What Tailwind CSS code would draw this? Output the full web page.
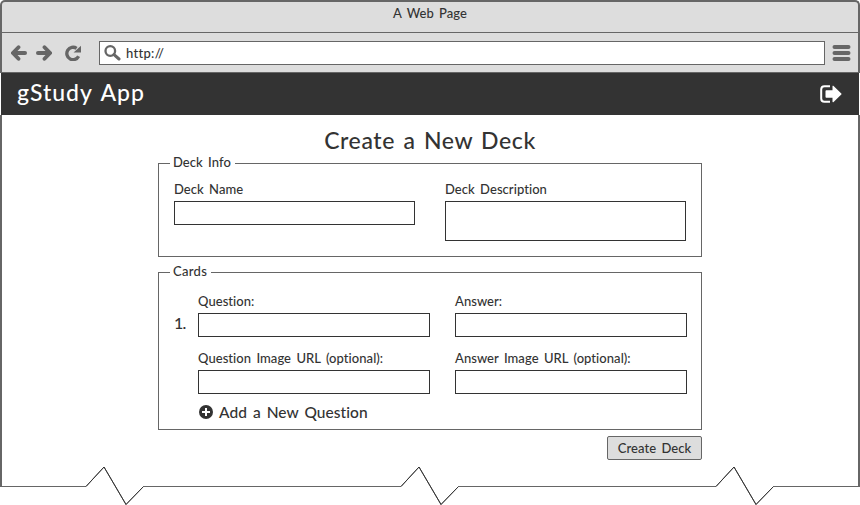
<!DOCTYPE html>
<html lang="en">
<head>
<meta charset="utf-8">
<title>gStudy App</title>
<script src="https://cdn.jsdelivr.net/npm/@tailwindcss/browser@4"></script>
</head>
<body class="w-[860px] h-[505px] overflow-hidden bg-white font-['Lato',sans-serif] font-medium text-[13px] leading-4 tracking-[0.05px] [word-spacing:2px] text-[#333]">
<div class="relative flex h-[505px] flex-col">
  <div class="h-[73px] rounded-t-[5px] border-2 border-b-0 border-[#666] bg-[#ddd]">
    <div class="h-[31px] border-b border-[#666] pt-[3px] text-center"><span>A Web Page</span></div>
    <div class="flex h-[40px] items-center border-b border-[#666] pl-[9px] pr-[7px]">
      <svg class="h-4 w-4" viewBox="0 0 16 16" fill="none" stroke="#666" stroke-linecap="round"><path d="M4 8H14" stroke-width="4"/><path d="M7.500 2.200L2 8L7.500 13.800" stroke-width="3.800"/></svg>
      <svg class="ml-[9px] h-4 w-4" viewBox="0 0 16 16" fill="none" stroke="#666" stroke-linecap="round"><path d="M2 8H12" stroke-width="4"/><path d="M8.500 2.200L14 8L8.500 13.800" stroke-width="3.800"/></svg>
      <svg class="ml-[12px] h-4 w-[18px]" viewBox="0 0 18 16" fill="none"><path d="M14.6 11.2A6.2 6.2 0 1 1 12.6 3.4" stroke="#666" stroke-width="3.300"/><path d="M17 .8V7.6H9.600Z" fill="#666"/></svg>
      <div class="ml-[17px] flex h-6 w-[726px] items-center border border-[#666] bg-white pl-[4px]">
        <svg class="h-4 w-[17px]" viewBox="0 0 17 16" fill="none" stroke="#666"><circle cx="6.3" cy="6" r="4.8" stroke-width="2.3"/><path d="M10 9.6L15 14" stroke-width="3" stroke-linecap="round"/></svg>
        <span class="ml-[5px] tracking-[0.3px]">http://</span>
      </div>
      <svg class="ml-[7px] h-[18px] w-[19px]" viewBox="0 0 19 18" stroke="#666" stroke-width="4" stroke-linecap="round"><path d="M2.5 3H16.5M2.5 9H16.5M2.5 15H16.5"/></svg>
    </div>
  </div>
  <div class="mr-px ml-px flex h-[42px] items-center justify-between bg-[#333] pr-[17px] pl-[16px] text-[23px] leading-7 tracking-[1px] text-white">
    <span class="relative -top-[2px]">gStudy App</span>
    <svg class="h-[18px] w-[22px]" viewBox="0 0 22 18"><path d="M10 1.2H4.5C2.2 1.2 1.2 2.5 1.2 4.5V13.5C1.2 15.5 2.2 16.8 4.5 16.8H10" fill="none" stroke="#fff" stroke-width="2"/><path d="M5.5 6.3C5.5 5.5 6 5.2 6.6 5.2H12.5V1.2C12.5.6 13.2.6 13.6 1L21.3 8.4Q21.9 9 21.3 9.6L13.6 17C13.2 17.4 12.5 17.4 12.5 16.8V12.8H6.6C6 12.8 5.5 12.5 5.5 11.7Z" fill="#fff"/></svg>
  </div>
  <main class="h-[371px] border-x-2 border-[#666]">
    <div class="mx-auto w-[544px] pt-[10px]">
      <h1 class="h-[38px] text-center text-[23px] leading-[30px] tracking-[0.6px]"><span>Create a New Deck</span></h1>
      <section class="relative flex h-[94px] gap-[30px] border border-[#666] pt-[17px] pl-[15px]">
        <h2 class="absolute -top-[10px] left-[11px] bg-white pr-[4px] pl-[3px]">Deck Info</h2>
        <label class="flex w-[241px] flex-col gap-1"><span>Deck Name</span><span class="h-6 border border-[#333]"></span></label>
        <label class="flex w-[241px] flex-col gap-1"><span>Deck Description</span><span class="h-10 border border-[#333]"></span></label>
      </section>
      <section class="relative mt-[15px] flex h-[158px] border border-[#666] pt-[20px] pl-[15px]">
        <h2 class="absolute -top-[10px] left-[11px] bg-white pr-[4px] pl-[3px] tracking-[0.3px]">Cards</h2>
        <div class="w-6 pt-[20px] text-[16px] leading-5 tracking-[-0.8px]">1.</div>
        <div>
          <div class="grid grid-cols-[232px_232px] gap-x-[25px] gap-y-[13px]">
            <label class="flex flex-col gap-1"><span>Question:</span><span class="h-6 border border-[#333]"></span></label>
            <label class="flex flex-col gap-1"><span>Answer:</span><span class="h-6 border border-[#333]"></span></label>
            <label class="flex flex-col gap-1"><span>Question Image URL (optional):</span><span class="h-6 border border-[#333]"></span></label>
            <label class="flex flex-col gap-1"><span>Answer Image URL (optional):</span><span class="h-6 border border-[#333]"></span></label>
          </div>
          <div class="mt-[8px] flex items-center gap-[6px] pl-px text-[15.5px] leading-5"><svg class="h-[14px] w-[14px]" viewBox="0 0 14 14"><circle cx="7" cy="7" r="7" fill="#333"/><path d="M7 3V11M3 7H11" stroke="#fff" stroke-width="2"/></svg><span>Add a New Question</span></div>
        </div>
      </section>
      <div class="mt-[6px] ml-auto flex h-6 w-[95px] items-center justify-center rounded-[2px] border border-[#666] bg-[#ddd] pb-px"><span>Create Deck</span></div>
    </div>
  </main>
  <svg class="absolute top-[465px] left-0 h-10 w-[860px]" viewBox="0 465 860 40" fill="none"><path d="M0 486.5H86L104 467L126 504.5L143.500 486.500H401L419 467L441 504.500L458.500 486.500H716L734 467L756 504.500L773.500 486.500H860" stroke="#666"/><path d="M86 486.500L104 467L126 504.500L143.500 486.500M401 486.500L419 467L441 504.500L458.500 486.500M716 486.500L734 467L756 504.500L773.500 486.500" stroke="#333"/></svg>
</div>
</body>
</html>
